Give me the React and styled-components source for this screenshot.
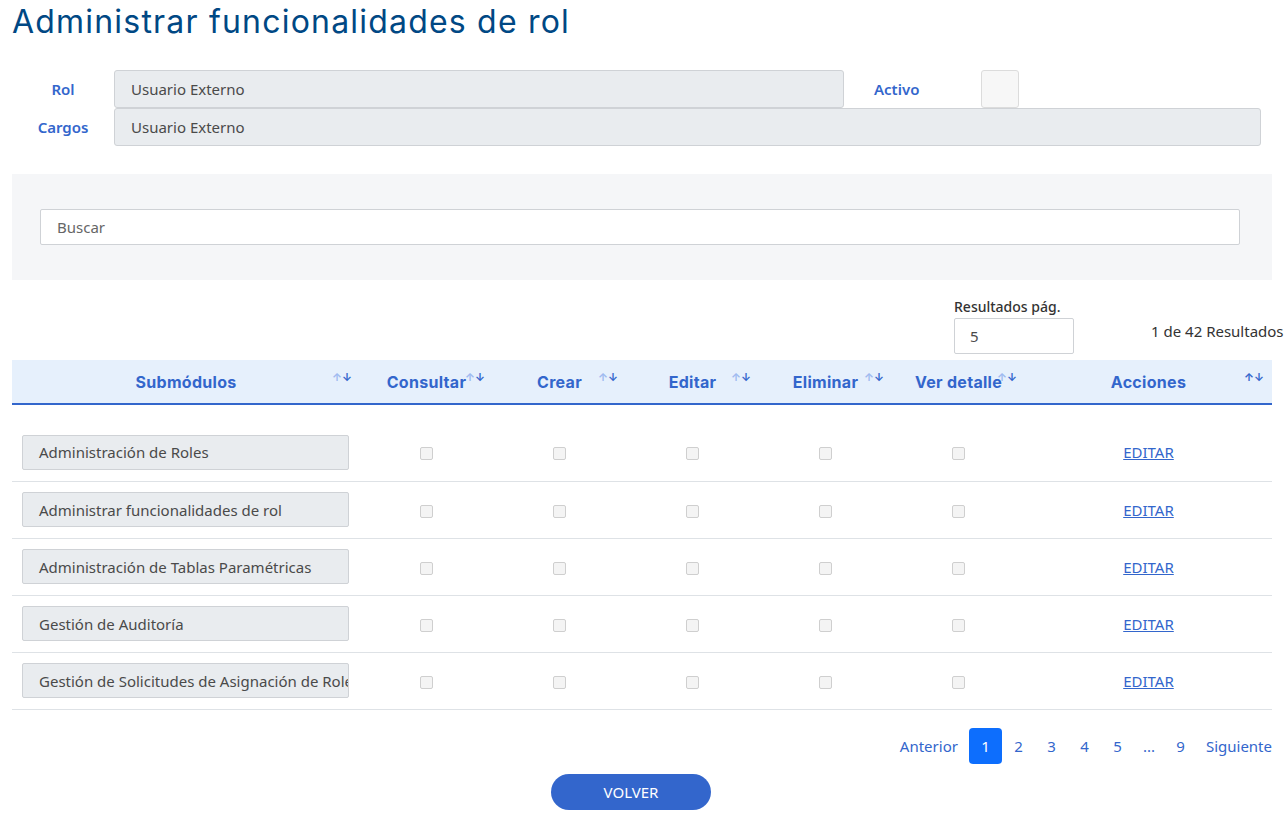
import React from "react";
import styled, { createGlobalStyle } from "styled-components";

const GlobalStyle = createGlobalStyle`
  html, body {
    margin: 0;
    padding: 0;
    background: #ffffff;
    font-family: "Noto Sans", "Open Sans", sans-serif;
    color: #4a4a4a;
  }
`;

const Page = styled.div`
  padding: 0 15px 0 12px;
  width: 1260px;
`;

const Title = styled.h1`
  margin: 0;
  padding-top: 2px;
  font-family: Inter, "Noto Sans", sans-serif;
  font-weight: 400;
  font-size: 32px;
  line-height: 40px;
  letter-spacing: 1.2px;
  color: #004884;
`;

const FormGrid = styled.div`
  display: grid;
  grid-template-columns: 102px 730px 137px 38px 242px;
  grid-template-rows: 38px 38px;
  align-items: center;
  margin-top: 28px;
`;

const Label = styled.label`
  text-align: ${(p) => (p.left ? "left" : "center")};
  padding-left: ${(p) => (p.left ? "30px" : "0")};
  font-size: 15px;
  font-weight: 600;
  color: #3366cc;
`;

const ReadOnly = styled.div`
  grid-column: ${(p) => p.span || "auto"};
  height: 38px;
  box-sizing: border-box;
  display: flex;
  align-items: center;
  padding: 0 16px;
  background: #e9ecef;
  border: 1px solid #cfd2d6;
  border-radius: 3px;
  font-size: 15px;
  color: #4a4a4a;
`;

const BigCheck = styled.div`
  width: 38px;
  height: 38px;
  box-sizing: border-box;
  background: #f7f7f7;
  border: 1px solid #dcdcdc;
  border-radius: 3px;
`;

const SearchPanel = styled.div`
  margin-top: 28px;
  background: #f5f6f8;
  padding: 35px 32px 35px 28px;
`;

const SearchInput = styled.input`
  display: block;
  width: 100%;
  height: 36px;
  box-sizing: border-box;
  border: 1px solid #cfd2d6;
  border-radius: 2px;
  padding: 0 16px;
  font-family: "Noto Sans", sans-serif;
  font-size: 15px;
  color: #4a4a4a;
  background: #ffffff;
  &::placeholder {
    color: #666;
  }
`;

const ResultsBar = styled.div`
  display: grid;
  grid-template-columns: 942px 120px 77px auto;
  align-items: end;
  margin-top: 17px;
`;

const PerPage = styled.div`
  grid-column: 2;
  display: flex;
  flex-direction: column;
  gap: 2px;
  font-size: 14px;
  font-weight: 500;
  color: #333;
`;

const PerPageInput = styled.div`
  height: 36px;
  box-sizing: border-box;
  border: 1px solid #cfd2d6;
  border-radius: 2px;
  padding: 0 15px;
  display: flex;
  align-items: center;
  font-size: 15px;
  font-weight: 400;
  color: #4a4a4a;
`;

const Count = styled.div`
  grid-column: 4;
  white-space: nowrap;
  font-size: 15px;
  color: #333;
  align-self: start;
  margin-top: 24px;
`;

const Table = styled.table`
  width: 100%;
  margin-top: 6px;
  border-collapse: collapse;
  table-layout: fixed;
`;

const Th = styled.th`
  position: relative;
  width: ${(p) => p.w}px;
  height: 43px;
  padding: 0;
  background: #e6f0fc;
  border-bottom: 2px solid #3366cc;
  text-align: center;
  font-family: Inter, "Noto Sans", sans-serif;
  font-size: 16px;
  font-weight: 700;
  letter-spacing: 0.3px;
  color: #3366cc;
`;

const SortIcon = styled.span`
  position: absolute;
  right: 8px;
  top: 12px;
  display: flex;
  font-size: 11px;
  line-height: 1;
  font-weight: 700;
  letter-spacing: 0;
  & span:first-child {
    color: ${(p) => (p.active ? "#3366cc" : "#9fbaf0")};
  }
  & span:last-child {
    color: #3366cc;
  }
`;

const Spacer = styled.tr`
  height: 20px;
`;

const Row = styled.tr`
  height: 57px;
  border-bottom: 1px solid #dee2e6;
`;

const Td = styled.td`
  padding: 0 10px;
  text-align: center;
`;

const NameBox = styled.div`
  width: 327px;
  height: 35px;
  box-sizing: border-box;
  padding: 0 16px;
  display: flex;
  align-items: center;
  background: #e9ecef;
  border: 1px solid #cfd2d6;
  border-radius: 2px;
  font-size: 15px;
  color: #4a4a4a;
  white-space: nowrap;
  overflow: hidden;
  text-align: left;
`;

const SmallCheck = styled.span`
  display: inline-block;
  width: 13px;
  height: 13px;
  box-sizing: border-box;
  background: #f4f4f4;
  border: 1px solid #cfcfcf;
  border-radius: 2px;
  vertical-align: middle;
`;

const EditLink = styled.a`
  font-size: 15px;
  color: #3366cc;
  text-decoration: underline;
  cursor: pointer;
`;

const Pagination = styled.ul`
  list-style: none;
  margin: 18px 0 0;
  padding: 0;
  display: flex;
  justify-content: flex-end;
  align-items: center;
`;

const PageItem = styled.li`
  height: 36px;
  width: ${(p) => (p.wide ? "auto" : p.narrow ? "30px" : "33px")};
  box-sizing: border-box;
  padding: 0 ${(p) => (p.wide ? "11px" : "0")};
  display: flex;
  align-items: center;
  justify-content: center;
  border-radius: 4px;
  font-size: 15px;
  color: ${(p) => (p.active ? "#ffffff" : "#3366cc")};
  background: ${(p) => (p.active ? "#0d6efd" : "transparent")};
  &:last-child {
    padding: 0 0 0 9px;
  }
`;

const Footer = styled.div`
  display: flex;
  justify-content: center;
  padding-right: 22px;
  margin-top: 10px;
`;

const BackButton = styled.button`
  width: 160px;
  height: 36px;
  border: none;
  border-radius: 18px;
  background: #3366cc;
  color: #ffffff;
  font-family: "Noto Sans", sans-serif;
  font-size: 15px;
  cursor: pointer;
`;

const columns = [
  { label: "Submódulos", w: 348 },
  { label: "Consultar", w: 133 },
  { label: "Crear", w: 133 },
  { label: "Editar", w: 133 },
  { label: "Eliminar", w: 133 },
  { label: "Ver detalle", w: 133 },
  { label: "Acciones", w: 247, active: true },
];

const rows = [
  "Administración de Roles",
  "Administrar funcionalidades de rol",
  "Administración de Tablas Paramétricas",
  "Gestión de Auditoría",
  "Gestión de Solicitudes de Asignación de Roles",
];

const pages = ["Anterior", "1", "2", "3", "4", "5", "...", "9", "Siguiente"];

export default function App() {
  return (
    <>
      <GlobalStyle />
      <Page>
        <Title>Administrar funcionalidades de rol</Title>

        <FormGrid>
          <Label>Rol</Label>
          <ReadOnly>Usuario Externo</ReadOnly>
          <Label left>Activo</Label>
          <BigCheck />
          <div />
          <Label>Cargos</Label>
          <ReadOnly span="2 / 6">Usuario Externo</ReadOnly>
        </FormGrid>

        <SearchPanel>
          <SearchInput placeholder="Buscar" />
        </SearchPanel>

        <ResultsBar>
          <PerPage>
            Resultados pág.
            <PerPageInput>5</PerPageInput>
          </PerPage>
          <Count>1 de 42 Resultados</Count>
        </ResultsBar>

        <Table>
          <thead>
            <tr>
              {columns.map((c) => (
                <Th key={c.label} w={c.w}>
                  {c.label}
                  <SortIcon active={c.active}>
                    <span>↑</span>
                    <span>↓</span>
                  </SortIcon>
                </Th>
              ))}
            </tr>
          </thead>
          <tbody>
            <Spacer />
            {rows.map((name) => (
              <Row key={name}>
                <Td>
                  <NameBox>{name}</NameBox>
                </Td>
                {[0, 1, 2, 3, 4].map((i) => (
                  <Td key={i}>
                    <SmallCheck />
                  </Td>
                ))}
                <Td>
                  <EditLink>EDITAR</EditLink>
                </Td>
              </Row>
            ))}
          </tbody>
        </Table>

        <Pagination>
          {pages.map((p) => (
            <PageItem
              key={p}
              active={p === "1"}
              wide={p.length > 3}
              narrow={p === "..."}
            >
              {p}
            </PageItem>
          ))}
        </Pagination>

        <Footer>
          <BackButton>VOLVER</BackButton>
        </Footer>
      </Page>
    </>
  );
}
